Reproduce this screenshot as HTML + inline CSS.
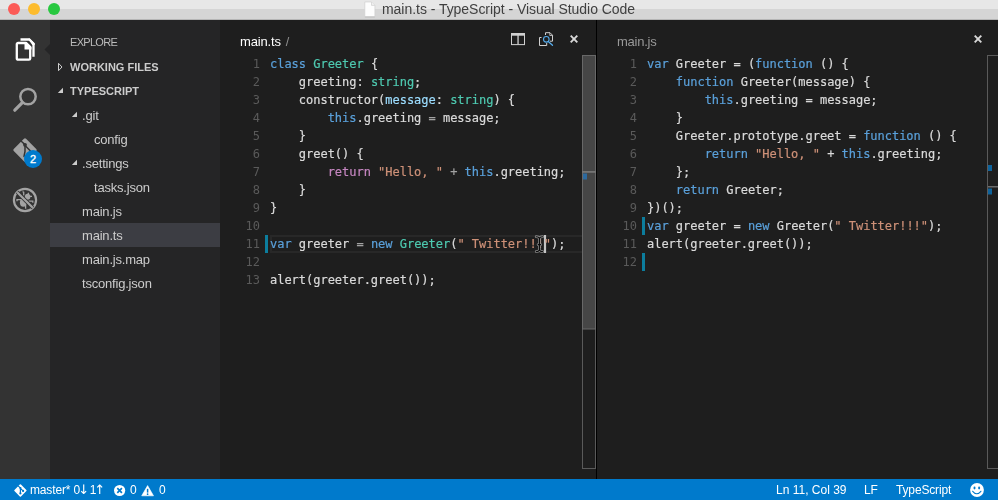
<!DOCTYPE html>
<html>
<head>
<meta charset="utf-8">
<title>main.ts - TypeScript - Visual Studio Code</title>
<style>
*{box-sizing:border-box;margin:0;padding:0}
html,body{width:998px;height:500px;overflow:hidden;background:#1e1e1e}
body{position:relative;font-family:"Liberation Sans",sans-serif;font-size:13px;color:#ccc}
.abs{position:absolute}
.row,.tabtitle,.ln,#title,.st,.gs{will-change:transform}
#titlebar{left:0;top:0;width:998px;height:20px;background:linear-gradient(#e7e7e7 0,#e7e7e7 9px,#d5d5d5 9px,#d5d5d5 100%);border-bottom:1px solid #b5b5b5}
.tl{position:absolute;top:3px;width:12px;height:12px;border-radius:50%}
#title{position:absolute;left:382px;top:-0.500px;font-size:14px;letter-spacing:-0.040px;color:#404040;white-space:nowrap;line-height:18px}
#activity{left:0;top:20px;width:50px;height:459px;background:#333}
#sidebar{left:50px;top:20px;width:170px;height:459px;background:#252526}
#ed1{left:220px;top:20px;width:376px;height:459px;background:#1e1e1e}
#divider{left:596px;top:20px;width:1px;height:459px;background:#000}
#ed2{left:597px;top:20px;width:401px;height:459px;background:#1e1e1e}
#status{left:0;top:479px;width:998px;height:21px;background:#007acc;color:#fff;font-size:12px}
.row{position:absolute;left:0;width:170px;height:24px;line-height:26px;white-space:nowrap;color:#ccc;font-size:13px;letter-spacing:-0.2px}
.row.sel{background:#3c3d43}
.hdr{font-weight:bold;font-size:11px;color:#ccc;letter-spacing:0;line-height:25px}
.code{will-change:transform;letter-spacing:-0.02px;position:absolute;font-family:"DejaVu Sans Mono","Liberation Mono",monospace;font-size:12px;line-height:18px;white-space:pre;color:#dadada;-webkit-text-stroke:0.2px}
.ln{position:absolute;font-family:"DejaVu Sans Mono","Liberation Mono",monospace;font-size:12px;line-height:18px;white-space:pre;color:#5a5a5a;text-align:right;width:30px}
.o{color:#a2a2a2}.k{color:#5aa0da}.t{color:#4ec9b0}.s{color:#ce9178}.c{color:#c586c0}.p{color:#9cdcfe}
.tabtitle{position:absolute;font-size:13px;white-space:nowrap;line-height:18px;letter-spacing:-0.150px}
.st{position:absolute;top:0;line-height:23.500px;white-space:nowrap;letter-spacing:-0.15px}
.ar{font-family:"DejaVu Sans",sans-serif;font-size:13px;letter-spacing:0;display:inline-block;width:6.500px;text-indent:-1.900px;line-height:21px;vertical-align:top;margin-top:0}
</style>
</head>
<body>
<div id="titlebar" class="abs">
  <div class="tl" style="left:8px;background:#fc5b57"></div>
  <div class="tl" style="left:28px;background:#fdbc2e"></div>
  <div class="tl" style="left:48px;background:#28c840"></div>
  <svg class="abs" style="left:363px;top:1px" width="14" height="17" viewBox="0 0 14 17"><path d="M1.800 1h6.700l3.400 3.400v11.300h-10.100z" fill="#fdfdfd" stroke="#d0d0d0" stroke-width="0.700"/><path d="M8.500 1v3.400h3.400" fill="#f0f0f0" stroke="#d0d0d0" stroke-width="0.700"/><path d="M1.800 16h10.100" stroke="#b8b8b8" stroke-width="0.700"/></svg>
  <div id="title">main.ts - TypeScript - Visual Studio Code</div>
</div>

<div id="activity" class="abs">
  <svg class="abs" style="left:0;top:0" width="50" height="230" viewBox="0 20 50 230">
    <!-- files icon -->
    <g fill="none" stroke="#fff" stroke-linejoin="round">
      <path d="M20.500 39.500h8.800l4.200 4.200v13" stroke-width="2.300"/>
      <path d="M18.100 43h8l4.100 4.100v11.300a1.300 1.300 0 0 1-1.300 1.300h-10.800a1.300 1.300 0 0 1-1.300-1.300v-14.100a1.300 1.300 0 0 1 1.300-1.300z" stroke-width="2.300"/>
    </g>
    <path d="M24.500 42h2l5 5v2.500h-7z" fill="#fff"/>
    <path d="M28.500 38.400h1.300l4.900 4.900v1.700h-2.500z" fill="#fff"/>
    <!-- notch -->
    <path d="M50 44l-5.500 5.500l5.500 5.500z" fill="#252526"/>
    <!-- search icon -->
    <g fill="none" stroke="#a3a3a3" stroke-linecap="round">
      <circle cx="28" cy="96.600" r="7.700" stroke-width="2.500"/>
      <path d="M22.300 102.600L14.800 110.200" stroke-width="3.200"/>
    </g>
    <!-- git icon -->
    <g transform="rotate(45 25 150)">
      <rect x="16.300" y="141.300" width="17.400" height="17.400" rx="1.500" fill="#a3a3a3"/>
    </g>
    <g fill="none" stroke="#333" stroke-width="1.500" stroke-linecap="round">
      <path d="M21.300 141.200l3.700 3.400"/>
      <path d="M25 145.500v6l-1 5"/>
      <path d="M25.500 146l5 5"/>
    </g>
    <circle cx="25" cy="144.800" r="1.900" fill="#333"/>
    <circle cx="33" cy="159" r="9" fill="#007acc"/>
    <text x="33" y="163" font-family="Liberation Sans, sans-serif" font-size="11" fill="#fff" stroke="#fff" stroke-width="0.350" text-anchor="middle">2</text>
    <!-- debug icon -->
    <g stroke="#a3a3a3" fill="none">
      <circle cx="25" cy="200" r="11.100" stroke-width="2.200"/>
      <ellipse cx="23.300" cy="202.600" rx="3.400" ry="4.200" fill="#a3a3a3" stroke="none"/>
      <ellipse cx="27.600" cy="196.800" rx="2.800" ry="3" fill="#a3a3a3" stroke="none"/>
      <path d="M23.700 191.800v3.700M28.600 192.800l-0.800 2.500M17 201.300v-1.600h4.500M29 196.400h3M28.500 201.200h4.300v1.500M25.600 204.500v4.300M22.500 191.900h1.200" stroke-width="1.300"/>
      <path d="M17.200 192.200L32.800 207.800" stroke="#333" stroke-width="3.800"/>
      <path d="M17.200 192.200L32.800 207.800" stroke-width="2.200"/>
    </g>
  </svg>
</div>

<div id="sidebar" class="abs">
  <svg class="abs" style="left:0;top:0" width="40" height="160" viewBox="50 20 40 160">
    <path d="M58.500 63.300v7.400l3.500-3.700z" fill="none" stroke="#ccc" stroke-width="1"/>
    <path d="M63 87.800v5.200h-5.200z" fill="#ccc"/>
    <path d="M77 111.800v5.200h-5.200z" fill="#ccc"/>
    <path d="M77 159.800v5.200h-5.200z" fill="#ccc"/>
  </svg>
  <div class="abs gs" style="left:20px;top:13px;font-size:11px;color:#bbb;line-height:18px;letter-spacing:-0.7px">EXPLORE</div>
  <div class="row hdr" style="top:35px"><span class="abs" style="left:20px">WORKING FILES</span></div>
  <div class="row hdr" style="top:59px"><span class="abs" style="left:20px">TYPESCRIPT</span></div>
  <div class="row" style="top:83px"><span class="abs" style="left:32px">.git</span></div>
  <div class="row" style="top:107px"><span class="abs" style="left:44px">config</span></div>
  <div class="row" style="top:131px"><span class="abs" style="left:32px">.settings</span></div>
  <div class="row" style="top:155px"><span class="abs" style="left:44px">tasks.json</span></div>
  <div class="row" style="top:179px"><span class="abs" style="left:32px">main.js</span></div>
  <div class="row sel" style="top:203px"><span class="abs" style="left:32px">main.ts</span></div>
  <div class="row" style="top:227px"><span class="abs" style="left:32px">main.js.map</span></div>
  <div class="row" style="top:251px"><span class="abs" style="left:32px">tsconfig.json</span></div>
</div>

<div id="ed1" class="abs">
  <svg class="abs" style="left:0;top:0" width="376" height="459" viewBox="220 20 376 459">
    <!-- split icon -->
    <rect x="511.500" y="33.600" width="13" height="11" fill="none" stroke="#d0d0d0" stroke-width="1"/>
    <rect x="511" y="33.100" width="14" height="2.600" fill="#d0d0d0"/>
    <rect x="517.400" y="33" width="1.300" height="11.500" fill="#d0d0d0"/>
    <!-- preview icon -->
    <g fill="none" stroke="#d0d0d0" stroke-width="1">
      <path d="M545.500 35v-2.300h4.500l2.500 2.500v6h-2.500"/>
      <path d="M549.800 32.800v2.700h2.700" stroke-width="0.800"/>
      <path d="M541.500 37.500h-2v8h7.200v-2.500"/>
    </g>
    <circle cx="546.300" cy="39.300" r="2.800" fill="#1e1e1e" stroke="#55acec" stroke-width="1.100"/>
    <path d="M548.300 41.400l4.200 3.900" stroke="#55acec" stroke-width="1.300" stroke-linecap="round"/>
    <!-- close -->
    <path d="M570.700 35.700l6.600 6.600M577.300 35.700l-6.600 6.600" stroke="#d8d8d8" stroke-width="1.900"/>
    <!-- current line -->
    <rect x="271" y="236" width="318" height="16" fill="none" stroke="#282828" stroke-width="2"/>
    <!-- overview ruler + scrollbar -->
    <rect x="582.500" y="55.500" width="13" height="413" fill="none" stroke="#5a5a5a" stroke-width="1"/>
    <rect x="582" y="55" width="14" height="274" fill="#464646"/>
    <rect x="582.500" y="55.500" width="13" height="273.500" fill="none" stroke="#686868" stroke-width="1"/>
    <rect x="582" y="171" width="14" height="1.800" fill="#747474"/>
    <rect x="583" y="173.500" width="4" height="6" fill="#2d6a9f"/>
    <rect x="265" y="235" width="3" height="18" fill="#0c7d9d"/>
    <!-- cursor -->
    <rect x="543.900" y="235" width="2.200" height="18" fill="#c4c4c4"/>
  </svg>
  <div class="tabtitle" style="left:19.500px;top:13px;color:#fff">main.ts <span style="color:#909090;margin-left:1.500px;font-size:12.500px">/</span></div>
  <div class="ln" style="left:10px;top:35px">1
2
3
4
5
6
7
8
9
10
11
12
13</div>
  <div class="code" style="left:50px;top:35px"><span class="k">class</span> <span class="t">Greeter</span> {
    greeting: <span class="t">string</span>;
    constructor(<span class="p">message</span>: <span class="t">string</span>) {
        <span class="k">this</span>.greeting <span class="o">=</span> message;
    }
    greet() {
        <span class="c">return</span> <span class="s">"Hello, "</span> <span class="o">+</span> <span class="k">this</span>.greeting;
    }
}

<span class="k">var</span> greeter <span class="o">=</span> <span class="k">new</span> <span class="t">Greeter</span>(<span class="s">" Twitter!!!"</span>);

alert(greeter.greet());</div>
  <svg class="abs" style="left:300px;top:210px" width="40" height="30" viewBox="520 230 40 30">
    <!-- mouse I-beam -->
    <g fill="none" stroke-linecap="round">
      <path d="M536.200 236.700q2.500 0 3.200 1.600q0.700-1.600 3.200-1.600M536.200 251.600q2.500 0 3.200-1.600q0.700 1.600 3.200 1.600M539.400 238.300v11.700M538.100 244.600h2.600" stroke="#8e8e8e" stroke-width="2.700"/>
      <path d="M536.200 236.700q2.500 0 3.200 1.600q0.700-1.600 3.200-1.600M536.200 251.600q2.500 0 3.200-1.600q0.700 1.600 3.200 1.600M539.400 238.300v11.700M538.100 244.600h2.600" stroke="#0a0a0a" stroke-width="1.150"/>
    </g>
  </svg>
</div>

<div id="divider" class="abs"></div>

<div id="ed2" class="abs">
  <svg class="abs" style="left:0;top:0" width="401" height="459" viewBox="597 20 401 459">
    <path d="M974.700 35.700l6.600 6.600M981.300 35.700l-6.600 6.600" stroke="#d8d8d8" stroke-width="1.900"/>
    <rect x="987.500" y="55.500" width="13" height="413" fill="none" stroke="#5a5a5a" stroke-width="1"/>
    <rect x="988" y="165" width="4" height="6" fill="#0e639c"/>
    <rect x="988" y="186" width="12" height="1.500" fill="#6a6a6a"/>
    <rect x="988" y="188.500" width="4" height="6" fill="#0e639c"/>
    <rect x="642" y="217" width="3" height="18" fill="#0c7d9d"/>
    <rect x="642" y="253" width="3" height="18" fill="#0c7d9d"/>
  </svg>
  <div class="tabtitle" style="left:19.500px;top:13px;color:#999;letter-spacing:-0.250px">main.js</div>
  <div class="ln" style="left:10px;top:35px">1
2
3
4
5
6
7
8
9
10
11
12</div>
  <div class="code" style="left:50px;top:35px"><span class="k">var</span> Greeter = (<span class="k">function</span> () {
    <span class="k">function</span> Greeter(message) {
        <span class="k">this</span>.greeting = message;
    }
    Greeter.prototype.greet = <span class="k">function</span> () {
        <span class="k">return</span> <span class="s">"Hello, "</span> + <span class="k">this</span>.greeting;
    };
    <span class="k">return</span> Greeter;
})();
<span class="k">var</span> greeter = <span class="k">new</span> Greeter(<span class="s">" Twitter!!!"</span>);
alert(greeter.greet());
</div>
</div>

<div id="status" class="abs">
  <svg class="abs" style="left:0;top:0" width="998" height="21" viewBox="0 479 998 21">
    <!-- git -->
    <g transform="rotate(45 20.400 490.500)"><rect x="15.800" y="485.900" width="9.200" height="9.200" rx="0.800" fill="#fff"/></g>
    <g stroke="#007acc" stroke-width="1.200" fill="none" stroke-linecap="round"><path d="M18.400 486.100l1.900 1.800M20.400 488.300v5M20.700 488.600l2.300 2.300"/></g>
    <circle cx="20.400" cy="488.100" r="1.100" fill="#007acc"/><circle cx="20.400" cy="493.400" r="1.100" fill="#007acc"/><circle cx="23.100" cy="490.900" r="1.100" fill="#007acc"/>
    <!-- error -->
    <circle cx="119.600" cy="490.500" r="5.600" fill="#fff"/>
    <path d="M117.300 488.200l4.600 4.600M121.900 488.200l-4.600 4.600" stroke="#007acc" stroke-width="1.700"/>
    <!-- warning -->
    <path d="M147.600 485.600l5.900 10.200h-11.800z" fill="#fff" stroke="#fff" stroke-width="0.600" stroke-linejoin="round"/>
    <path d="M147.600 488.800v3.800" stroke="#007acc" stroke-width="1.500"/>
    <circle cx="147.600" cy="494.200" r="0.850" fill="#007acc"/>
    <!-- smiley -->
    <circle cx="977" cy="490" r="6.900" fill="#fff"/>
    <ellipse cx="974.500" cy="488" rx="1" ry="1.400" fill="#007acc"/>
    <ellipse cx="979.100" cy="488" rx="1" ry="1.400" fill="#007acc"/>
    <path d="M972.700 491.300q4.100 5 8.200 0" fill="none" stroke="#007acc" stroke-width="1.100" stroke-linecap="round"/>
  </svg>
  <span class="st" style="left:29.600px">master* 0<span class="ar">↓</span> 1<span class="ar">↑</span></span>
  <span class="st" style="left:130px">0</span>
  <span class="st" style="left:159px">0</span>
  <span class="st" style="left:776px;letter-spacing:0">Ln 11, Col 39</span>
  <span class="st" style="left:863.500px">LF</span>
  <span class="st" style="left:895.500px">TypeScript</span>
</div>
</body>
</html>
